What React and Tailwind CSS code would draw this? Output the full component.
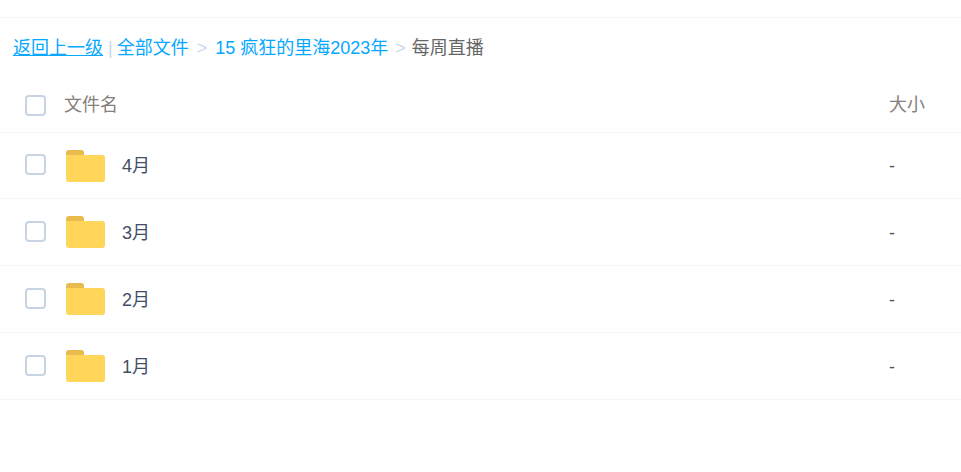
const font = { fontFamily: '"Liberation Sans", "Noto Sans CJK SC", sans-serif' };

const folders = ['4月', '3月', '2月', '1月'];

function Checkbox() {
  return <span className="block w-[21px] h-[21px] rounded-[4px] border-2 border-[#c8d4e3] bg-white" />;
}

function FolderIcon() {
  return (
    <svg width="39" height="32" viewBox="0 0 39 32" className="block ml-[2px]">
      <path d="M0 8V3a3 3 0 0 1 3-3h12a3 3 0 0 1 3 3v3H0z" fill="#e8bb4c" />
      <path d="M0 5h36a3 3 0 0 1 3 3v21a3 3 0 0 1-3 3H3a3 3 0 0 1-3-3z" fill="#ffd659" />
    </svg>
  );
}

export default function App() {
  return (
    <div className="w-[961px] h-[472px] bg-white overflow-hidden" style={font}>
      <div className="h-[18px] border-b border-[#f3f5f8]" />
      <div className="flex items-center h-[60px] pl-[13px] text-[18px] text-[#06a7ff] whitespace-nowrap">
        <a className="underline">返回上一级</a>
        <span className="ml-[5px] mr-[4px] text-[#c8d7ec]">|</span>
        <a>全部文件</a>
        <span className="mx-[8px] text-[#c8d7ec]">&gt;</span>
        <a>15 疯狂的里海2023年</a>
        <span className="ml-[7px] mr-[6px] text-[#c8d7ec]">&gt;</span>
        <span className="text-[#666]">每周直播</span>
      </div>
      <div className="flex items-center h-[55px] border-b border-[#f5f6f8] text-[18px] text-[#85807a]">
        <div className="w-[64px] pl-[25px]"><Checkbox /></div>
        <div className="flex-1">文件名</div>
        <div className="w-[72px]">大小</div>
      </div>
      {folders.map((name, i) => (
        <div key={name} className={`flex items-center ${i === 0 ? 'h-[66px]' : 'h-[67px]'} border-b border-[#f3f5f8] text-[18px] text-[#424e67]`}>
          <div className="w-[64px] pl-[25px] -mt-[2px]"><Checkbox /></div>
          <div className="w-[58px]"><FolderIcon /></div>
          <div className="flex-1 mt-[2px]">{name}</div>
          <div className="w-[72px] mt-[2px] text-[#555]">-</div>
        </div>
      ))}
    </div>
  );
}
